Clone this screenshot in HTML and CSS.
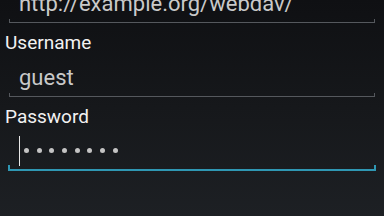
FILE: index.html
```html
<!DOCTYPE html>
<html lang="en">
<head>
    <meta charset="UTF-8">
    <meta name="viewport" content="width=device-width, initial-scale=1.0">
    <title>WebDAV Account</title>
    <link rel="stylesheet" href="styles.css">
</head>
<body>
    <div class="form">
        <div class="field">
            <div class="input">http://example.org/webdav/</div>
            <div class="line"></div>
        </div>

        <div class="field">
            <div class="label">Username</div>
            <div class="input">guest</div>
            <div class="line"></div>
        </div>

        <div class="field">
            <div class="label">Password</div>
            <div class="input input-password">
                <span class="cursor"></span>
                <span class="dot"></span>
                <span class="dot"></span>
                <span class="dot"></span>
                <span class="dot"></span>
                <span class="dot"></span>
                <span class="dot"></span>
                <span class="dot"></span>
                <span class="dot"></span>
            </div>
            <div class="line line-focused"></div>
        </div>
    </div>
</body>
</html>
```

FILE: styles.css
```css
* {
    margin: 0;
    padding: 0;
    box-sizing: border-box;
}

html, body {
    height: 100%;
}

body {
    font-family: 'Roboto', 'Noto Sans', sans-serif;
    background: linear-gradient(180deg, #0f1013 0%, #16181b 50%, #1d2024 100%);
    overflow: hidden;
}

/* scrolled so the first field's label is off screen */
.form {
    margin-top: -12px;
    padding: 0 9px 0 5px;
}

.label {
    margin-top: 7px;
    font-size: 19px;
    line-height: 25px;
    color: #f2f2f2;
}

.input {
    margin-top: 7px;
    padding-left: 14px;
    font-size: 22px;
    line-height: 31px;
    height: 31px;
    color: #c9c9c9;
    white-space: nowrap;
}

.field:first-child .input {
    margin-top: 0;
}

.input-password {
    display: flex;
    align-items: center;
    height: 29px;
    padding-left: 14px;
}

.cursor {
    width: 1px;
    height: 30px;
    margin-top: 1px;
    background: #e8e8e8;
    margin-right: 4px;
}

.dot {
    width: 5px;
    height: 5px;
    border-radius: 50%;
    background: #c4c4c4;
    margin-right: 7.7px;
}

.line {
    margin-left: 4px;
    height: 4px;
    border: 1px solid #55585d;
    border-top: none;
}

.line-focused {
    margin-left: 3px;
    margin-right: -1px;
    height: 6px;
    border: 2px solid #2f97b3;
    border-top: none;
}
```
